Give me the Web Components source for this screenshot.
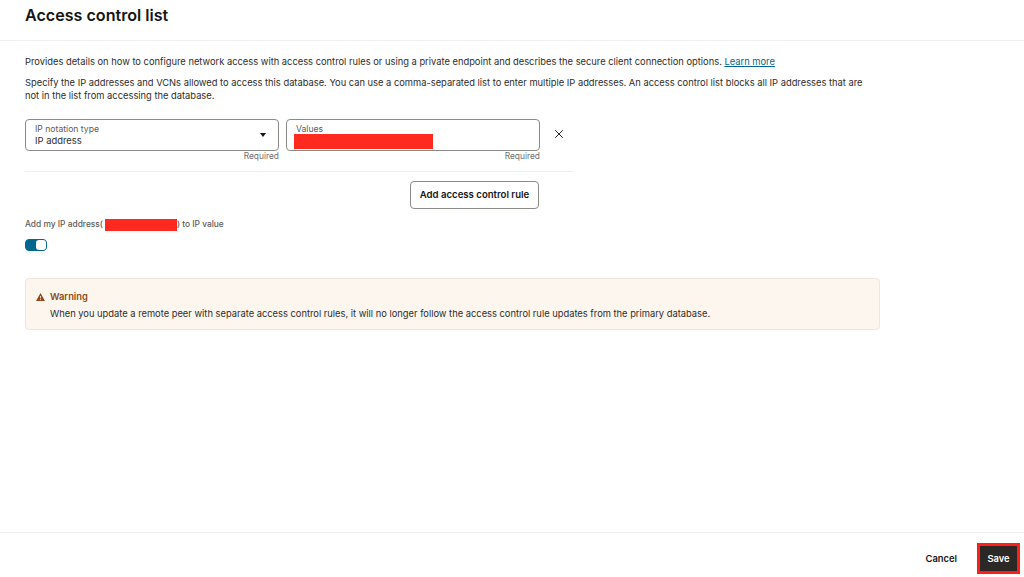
<!DOCTYPE html>
<html lang="en">
<head>
<meta charset="utf-8">
<title>Access control list</title>
<style>
  html, body { margin: 0; height: 100%; background: #fff; }
  body { font-family: Inter, "Liberation Sans", sans-serif; color: #262626; overflow: hidden; }
</style>
</head>
<body>
<acl-panel>
  <span slot="title">Access control list</span>
  <acl-intro></acl-intro>
  <acl-rule></acl-rule>
  <acl-my-ip></acl-my-ip>
  <acl-warning heading="Warning">When you update a remote peer with separate access control rules, it will no longer follow the access control rule updates from the primary database.</acl-warning>
  <acl-footer slot="footer"></acl-footer>
</acl-panel>

<script>
class AclPanel extends HTMLElement {
  constructor() {
    super();
    this.attachShadow({ mode: 'open' });
    this.shadowRoot.innerHTML = `
      <style>
        :host { display: flex; flex-direction: column; width: 1024px; height: 577px; }
        header {
          height: 41px;
          box-sizing: border-box;
          border-bottom: 1px solid #efefed;
          padding: 5px 25px 0;
          font-size: 16.1px;
          line-height: 20px;
          font-weight: 600;
          color: #161513;
          flex: none;
        }
        main { flex: 1; padding: 0 25px; min-height: 0; }
        footer { flex: none; }
      </style>
      <header><slot name="title"></slot></header>
      <main><slot></slot></main>
      <footer><slot name="footer"></slot></footer>
    `;
  }
}

class AclIntro extends HTMLElement {
  constructor() {
    super();
    this.attachShadow({ mode: 'open' });
    this.shadowRoot.innerHTML = `
      <style>
        :host { display: block; padding-top: 14px; width: 845px; font-size: 9.33px; line-height: 13px; color: #2e2c2a; }
        p { margin: 0 0 8px; }
        a { color: #00688c; text-decoration: underline; }
      </style>
      <p>Provides details on how to configure network access with access control rules or using a private endpoint and describes the secure client connection options. <a href="#">Learn more</a></p>
      <p>Specify the IP addresses and VCNs allowed to access this database. You can use a comma-separated list to enter multiple IP addresses. An access control list blocks all IP addresses that are not in the list from accessing the database.</p>
    `;
  }
}

class AclField extends HTMLElement {
  constructor() {
    super();
    this.attachShadow({ mode: 'open' });
    this.shadowRoot.innerHTML = `
      <style>
        :host { display: block; width: 254px; }
        .box {
          position: relative;
          box-sizing: border-box;
          height: 32px;
          border: 1px solid #8c8a87;
          border-radius: 4px;
          padding: 4px 9px 0;
        }
        .label { font-size: 8.65px; line-height: 11px; color: #5c5a58; }
        .value { font-size: 9.4px; line-height: 13px; margin-top: -1px; color: #2e2c2a; }
        .req { font-size: 8.4px; line-height: 11px; color: #6f6d6b; text-align: right; }
        ::slotted(svg) { position: absolute; right: 12px; top: 13px; }
      </style>
      <div class="box">
        <div class="label"></div>
        <div class="value"><slot name="value"></slot></div>
        <slot name="adorn"></slot>
      </div>
      <div class="req">Required</div>
    `;
  }
  connectedCallback() {
    this.shadowRoot.querySelector('.label').textContent = this.getAttribute('label');
  }
}

class AclRedact extends HTMLElement {
  constructor() {
    super();
    this.attachShadow({ mode: 'open' });
    this.shadowRoot.innerHTML = `
      <style>
        :host { display: inline-block; background: #ff2a1f; vertical-align: top; }
      </style>
    `;
  }
  connectedCallback() {
    this.style.width = this.getAttribute('w') + 'px';
    this.style.height = this.getAttribute('h') + 'px';
  }
}

class AclRule extends HTMLElement {
  constructor() {
    super();
    this.attachShadow({ mode: 'open' });
    this.shadowRoot.innerHTML = `
      <style>
        :host { display: block; width: 548px; margin-top: 17px; }
        .row { display: flex; gap: 7px; padding-bottom: 9px; border-bottom: 1px solid #efefed; }
        .close { flex: none; margin: 9px 0 0 6px; width: 12px; height: 12px; }
        .actions { display: flex; justify-content: flex-end; padding: 9px 34px 0 0; }
        button {
          box-sizing: border-box;
          width: 129px;
          height: 28px;
          background: #fff;
          border: 1px solid #8c8a87;
          border-radius: 4px;
          font: 600 9.6px Inter, "Liberation Sans", sans-serif;
          color: #161513;
          padding: 0 0 2px;
        }
        .value-redact { margin-left: -2px; }
      </style>
      <div class="row">
        <acl-field label="IP notation type">
          <span slot="value">IP address</span>
          <svg slot="adorn" width="6" height="4" viewBox="0 0 6 4"><path d="M0 0h6L3 4z" fill="#161513"/></svg>
        </acl-field>
        <acl-field label="Values">
          <acl-redact slot="value" class="value-redact" w="139" h="15"></acl-redact>
        </acl-field>
        <svg class="close" viewBox="0 0 12 12"><path d="M2.2 2.2l7.6 7.6M9.8 2.2l-7.6 7.6" stroke="#262626" stroke-width="1" fill="none"/></svg>
      </div>
      <div class="actions"><button type="button">Add access control rule</button></div>
    `;
  }
}

class AclMyIp extends HTMLElement {
  constructor() {
    super();
    this.attachShadow({ mode: 'open' });
    this.shadowRoot.innerHTML = `
      <style>
        :host { display: block; margin-top: 10px; }
        .label { display: flex; align-items: center; height: 11px; font-size: 8.4px; line-height: 11px; font-weight: 500; color: #5c5a58; }
        .mark { margin: 0 0 0 2px; }
        .toggle {
          box-sizing: border-box;
          position: relative;
          width: 22px;
          height: 12px;
          margin-top: 9px;
          border-radius: 4px;
          background: #00688c;
          border: 1px solid #00688c;
        }
        .toggle::after {
          content: "";
          position: absolute;
          right: 0;
          top: 0;
          width: 10px;
          height: 10px;
          border-radius: 3px;
          background: #fff;
        }
      </style>
      <div class="label">Add my IP address(<acl-redact class="mark" w="72" h="12"></acl-redact>) to IP value</div>
      <div class="toggle"></div>
    `;
  }
}

class AclWarning extends HTMLElement {
  constructor() {
    super();
    this.attachShadow({ mode: 'open' });
    this.shadowRoot.innerHTML = `
      <style>
        :host {
          display: block;
          box-sizing: border-box;
          width: 855px;
          height: 52px;
          margin-top: 27px;
          padding: 11px 10px 0 10px;
          background: #fdf6ee;
          border: 1px solid #f0e6dc;
          border-radius: 4px;
          font-size: 9.33px;
          line-height: 13px;
        }
        .head { display: flex; align-items: center; gap: 5px; font-weight: 600; color: #8a4a1c; }
        .body { margin: 4px 0 0 14px; color: #2e2c2a; }
        svg { flex: none; width: 9px; height: 8px; }
      </style>
      <div class="head">
        <svg viewBox="0 0 9 8"><path d="M4.5 0L9 8H0z" fill="#8f4a1d"/><path d="M4.5 3v2.4M4.5 6v.9" stroke="#fdf6ee" stroke-width=".8"/></svg>
        <span class="title"></span>
      </div>
      <div class="body"><slot></slot></div>
    `;
  }
  connectedCallback() {
    this.shadowRoot.querySelector('.title').textContent = this.getAttribute('heading');
  }
}

class AclFooter extends HTMLElement {
  constructor() {
    super();
    this.attachShadow({ mode: 'open' });
    this.shadowRoot.innerHTML = `
      <style>
        :host {
          display: flex;
          box-sizing: border-box;
          height: 45px;
          border-top: 1px solid #efefed;
          justify-content: flex-end;
          align-items: flex-start;
          padding: 10px 4px 0 0;
          font-size: 9.4px;
          font-weight: 600;
        }
        .cancel { margin: 9px 20px 0 0; line-height: 13px; color: #161513; }
        .save {
          box-sizing: border-box;
          width: 43px;
          height: 31px;
          border: 3px solid #ff1f1a;
          background: #2b2826;
          color: #fff;
          display: flex;
          align-items: center;
          justify-content: center;
        }
      </style>
      <span class="cancel">Cancel</span>
      <span class="save">Save</span>
    `;
  }
}

customElements.define('acl-panel', AclPanel);
customElements.define('acl-intro', AclIntro);
customElements.define('acl-field', AclField);
customElements.define('acl-redact', AclRedact);
customElements.define('acl-rule', AclRule);
customElements.define('acl-my-ip', AclMyIp);
customElements.define('acl-warning', AclWarning);
customElements.define('acl-footer', AclFooter);
</script>
</body>
</html>
